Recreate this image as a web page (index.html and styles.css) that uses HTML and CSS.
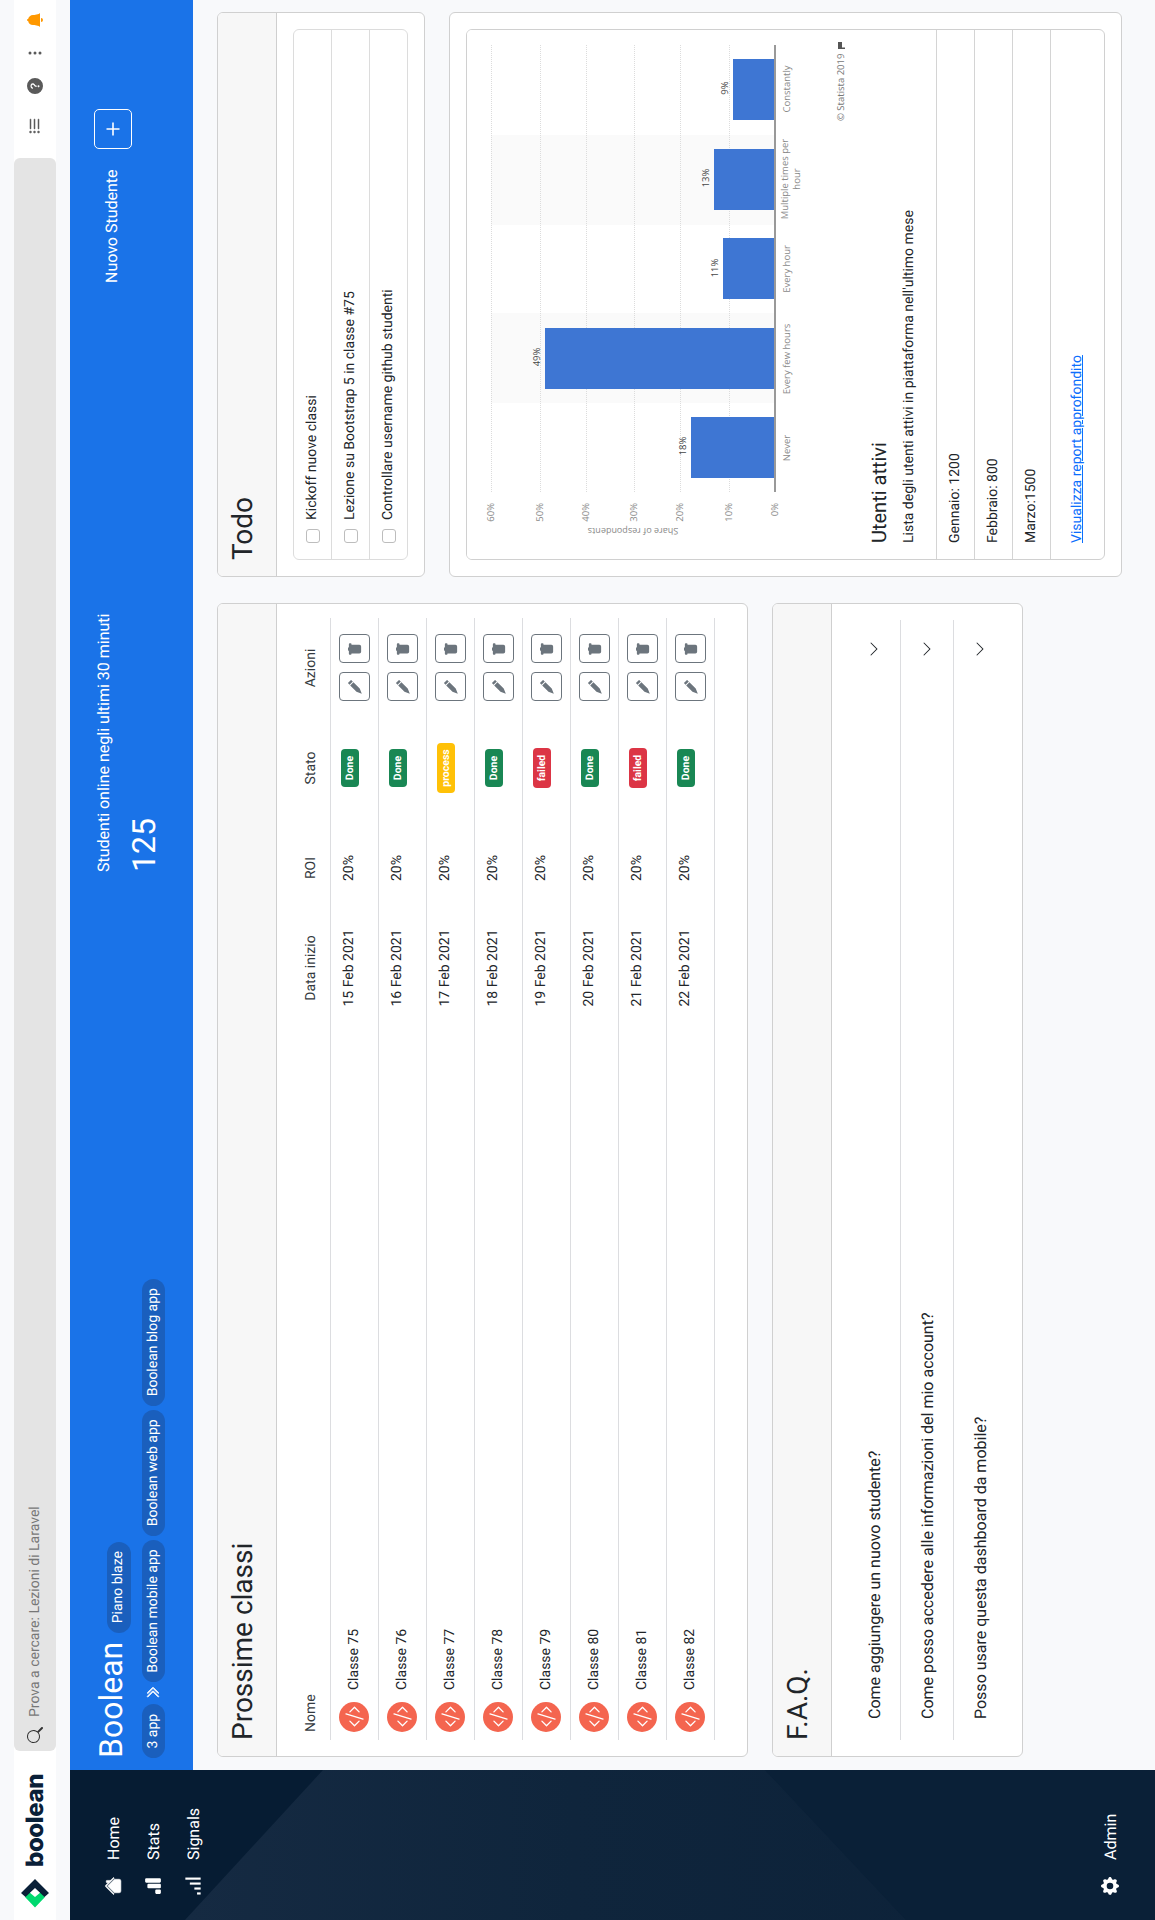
FILE: index.html
```html
<!DOCTYPE html>
<html lang="it">
<head>
<meta charset="utf-8">
<title>Boolean</title>
<link rel="stylesheet" href="styles.css">
</head>
<body>
<svg class="defs" width="0" height="0" aria-hidden="true">
  <symbol id="i-code" viewBox="0 0 16 16"><path d="M10.478 1.647a.5.5 0 1 0-.956-.294l-4 13a.5.5 0 0 0 .956.294l4-13zM4.854 4.146a.5.5 0 0 1 0 .708L1.707 8l3.147 3.146a.5.5 0 0 1-.708.708l-3.5-3.5a.5.5 0 0 1 0-.708l3.5-3.5a.5.5 0 0 1 .708 0zm6.292 0a.5.5 0 0 0 0 .708L14.293 8l-3.147 3.146a.5.5 0 0 0 .708.708l3.5-3.5a.5.5 0 0 0 0-.708l-3.5-3.5a.5.5 0 0 0-.708 0z"/></symbol>
  <symbol id="i-pencil" viewBox="0 0 16 16"><path d="M12.854.146a.5.5 0 0 0-.707 0L10.5 1.793 14.207 5.5l1.647-1.646a.5.5 0 0 0 0-.708l-3-3zM13.5 6.207 9.793 2.5 2.6 9.7.2 15.8l6.1-2.4z"/></symbol>
  <symbol id="i-trash" viewBox="0 0 16 16"><path d="M2.5 1a1 1 0 0 0-1 1v1a1 1 0 0 0 1 1H3v9a2 2 0 0 0 2 2h6a2 2 0 0 0 2-2V4h.5a1 1 0 0 0 1-1V2a1 1 0 0 0-1-1H10a1 1 0 0 0-1-1H7a1 1 0 0 0-1 1H2.5z"/></symbol>
  <symbol id="i-chev" viewBox="0 0 16 16"><path d="M1.646 4.646a.5.5 0 0 1 .708 0L8 10.293l5.646-5.647a.5.5 0 0 1 .708.708l-6 6a.5.5 0 0 1-.708 0l-6-6a.5.5 0 0 1 0-.708z"/></symbol>
</svg>

<div class="page">
  <header class="topbar">
    <a class="brand">
      <svg class="logo" viewBox="0 0 34 34" width="34" height="34">
        <polygon class="logo-green" points="2.5,17 13,27 18,23 13,17 18,11 13,7"/>
        <polygon class="logo-dark" points="31,17 17,31 13,26.5 22,17 13,7.5 17,3"/>
      </svg>
      <span class="brand-name">boolean</span>
    </a>
    <div class="search">
      <svg class="search-icon" viewBox="0 0 16 16" width="16" height="16"><path d="M11.742 10.344a6.5 6.5 0 1 0-1.397 1.398h-.001c.03.04.062.078.098.115l3.85 3.85a1 1 0 0 0 1.415-1.414l-3.85-3.85a1.007 1.007 0 0 0-.115-.1zM12 6.5a5.5 5.5 0 1 1-11 0 5.5 5.5 0 0 1 11 0z"/></svg>
      <span>Prova a cercare: Lezioni di Laravel</span>
    </div>
    <div class="tools">
      <svg class="tool tool-list" viewBox="0 0 16 16" width="16" height="16"><path d="M5 11.5a.5.5 0 0 1 .5-.5h9a.5.5 0 0 1 0 1h-9a.5.5 0 0 1-.5-.5zm0-4a.5.5 0 0 1 .5-.5h9a.5.5 0 0 1 0 1h-9a.5.5 0 0 1-.5-.5zm0-4a.5.5 0 0 1 .5-.5h9a.5.5 0 0 1 0 1h-9a.5.5 0 0 1-.5-.5zm-3 1a1 1 0 1 0 0-2 1 1 0 0 0 0 2zm0 4a1 1 0 1 0 0-2 1 1 0 0 0 0 2zm0 4a1 1 0 1 0 0-2 1 1 0 0 0 0 2z"/></svg>
      <svg class="tool" viewBox="0 0 16 16" width="16" height="16"><path d="M16 8A8 8 0 1 1 0 8a8 8 0 0 1 16 0zM5.496 6.033h.825c.138 0 .248-.113.266-.25.09-.656.54-1.134 1.342-1.134.686 0 1.314.343 1.314 1.168 0 .635-.374.927-.965 1.371-.673.489-1.206 1.06-1.168 1.987l.003.217a.25.25 0 0 0 .25.246h.811a.25.25 0 0 0 .25-.25v-.105c0-.718.273-.927 1.01-1.486.609-.463 1.244-.977 1.244-2.056 0-1.511-1.276-2.241-2.673-2.241-1.267 0-2.655.59-2.75 2.286a.237.237 0 0 0 .241.247zm2.325 6.443c.61 0 1.029-.394 1.029-.927 0-.552-.42-.94-1.029-.94-.584 0-1.009.388-1.009.94 0 .533.425.927 1.01.927z"/></svg>
      <svg class="tool" viewBox="0 0 16 16" width="16" height="16"><path d="M9.5 13a1.5 1.5 0 1 1-3 0 1.5 1.5 0 0 1 3 0zm0-5a1.5 1.5 0 1 1-3 0 1.5 1.5 0 0 1 3 0zm0-5a1.5 1.5 0 1 1-3 0 1.5 1.5 0 0 1 3 0z"/></svg>
      <svg class="tool tool-bell" viewBox="0 0 16 16" width="16" height="16"><path d="M8 16a2 2 0 0 0 2-2H6a2 2 0 0 0 2 2zm.995-14.901a1 1 0 1 0-1.99 0A5.002 5.002 0 0 0 3 6c0 1.098-.5 6-2 7h14c-1.5-1-2-5.902-2-7 0-2.42-1.72-4.44-4.005-4.901z"/></svg>
    </div>
  </header>

  <div class="shell">
    <nav class="sidebar">
      <svg class="side-art" viewBox="0 0 150 1085" width="150" height="1085" aria-hidden="true">
        <defs>
          <linearGradient id="side-fade" x1="0" y1="0" x2="0" y2="1">
            <stop offset="0" stop-color="#152a42"/>
            <stop offset="0.4" stop-color="#0f253c"/>
            <stop offset="1" stop-color="#0c2138"/>
          </linearGradient>
        </defs>
        <polygon fill="url(#side-fade)" points="0,115 150,253 150,1085 0,1085"/>
        <polygon class="side-shade" points="150,695 150,1085 0,1085 0,836"/>
      </svg>
      <a class="nav-item">
        <svg class="nav-icon nav-home" viewBox="0 0 16 16"><path d="M8 3.293l6 6V13.5a1.5 1.5 0 0 1-1.5 1.5h-9A1.5 1.5 0 0 1 2 13.5V9.293l6-6zm5-.793V6l-2-2V2.5a.5.5 0 0 1 .5-.5h1a.5.5 0 0 1 .5.5z"/><path d="M7.293 1.5a1 1 0 0 1 1.414 0l6.647 6.646a.5.5 0 0 1-.708.708L8 2.207 1.354 8.854a.5.5 0 1 1-.708-.708L7.293 1.5z"/></svg>
        <span>Home</span>
      </a>
      <a class="nav-item">
        <svg class="nav-icon" viewBox="0 0 16 16"><path d="M1 11a1 1 0 0 1 1-1h2a1 1 0 0 1 1 1v3a1 1 0 0 1-1 1H2a1 1 0 0 1-1-1v-3zm5-7a1 1 0 0 1 1-1h2a1 1 0 0 1 1 1v10a1 1 0 0 1-1 1H7a1 1 0 0 1-1-1V4zm5-2a1 1 0 0 1 1-1h2a1 1 0 0 1 1 1v12a1 1 0 0 1-1 1h-2a1 1 0 0 1-1-1V2z"/></svg>
        <span>Stats</span>
      </a>
      <a class="nav-item">
        <svg class="nav-icon" viewBox="0 0 20 18"><rect x="0.5" y="13.5" width="2.4" height="4"/><rect x="6" y="10.5" width="2.4" height="7"/><rect x="11.5" y="5.5" width="2.4" height="12"/><rect x="17" y="0.5" width="2.4" height="17"/></svg>
        <span>Signals</span>
      </a>
      <a class="nav-item nav-admin">
        <svg class="nav-icon" viewBox="0 0 16 16"><path d="M9.405 1.05c-.413-1.4-2.397-1.4-2.81 0l-.1.34a1.464 1.464 0 0 1-2.105.872l-.31-.17c-1.283-.698-2.686.705-1.987 1.987l.169.311c.446.82.023 1.841-.872 2.105l-.34.1c-1.4.413-1.4 2.397 0 2.81l.34.1a1.464 1.464 0 0 1 .872 2.105l-.17.31c-.698 1.283.705 2.686 1.987 1.987l.311-.169a1.464 1.464 0 0 1 2.105.872l.1.34c.413 1.4 2.397 1.4 2.81 0l.1-.34a1.464 1.464 0 0 1 2.105-.872l.31.17c1.283.698 2.686-.705 1.987-1.987l-.169-.311a1.464 1.464 0 0 1 .872-2.105l.34-.1c1.4-.413 1.4-2.397 0-2.81l-.34-.1a1.464 1.464 0 0 1-.872-2.105l.17-.31c.698-1.283-.705-2.686-1.987-1.987l-.311.169a1.464 1.464 0 0 1-2.105-.872l-.1-.34zM8 10.93a2.929 2.929 0 1 1 0-5.86 2.929 2.929 0 0 1 0 5.858z"/></svg>
        <span>Admin</span>
      </a>
    </nav>

    <main class="main">
      <section class="hero">
        <div class="hero-left">
          <div class="hero-title-row">
            <h1 class="hero-title">Boolean</h1>
            <span class="pill pill-plan">Piano blaze</span>
          </div>
          <div class="hero-apps">
            <span class="pill">3 app</span>
            <svg class="hero-chev" viewBox="0 0 16 16" width="14" height="14"><path d="M3.646 1.646a.5.5 0 0 1 .708 0l6 6a.5.5 0 0 1 0 .708l-6 6a.5.5 0 0 1-.708-.708L9.293 8 3.646 2.354a.5.5 0 0 1 0-.708z"/><path d="M7.646 1.646a.5.5 0 0 1 .708 0l6 6a.5.5 0 0 1 0 .708l-6 6a.5.5 0 0 1-.708-.708L13.293 8 7.646 2.354a.5.5 0 0 1 0-.708z"/></svg>
            <span class="pill">Boolean mobile app</span>
            <span class="pill">Boolean web app</span>
            <span class="pill">Boolean blog app</span>
          </div>
        </div>
        <div class="hero-mid">
          <div class="hero-label">Studenti online negli ultimi 30 minuti</div>
          <div class="hero-count">125</div>
        </div>
        <div class="hero-right">
          <span class="hero-new">Nuovo Studente</span>
          <button class="plus-btn" type="button">
            <svg viewBox="0 0 14 14" width="14" height="14"><path d="M7 .5v13M.5 7h13"/></svg>
          </button>
        </div>
      </section>

      <div class="columns">
        <div class="col col-left">
          <section class="card">
            <h2 class="card-head">Prossime classi</h2>
            <div class="card-body">
              <table class="classes">
                <colgroup><col class="c-name"><col class="c-num"><col class="c-num"><col class="c-num"><col class="c-num"></colgroup>
                <thead>
                  <tr><th class="left">Nome</th><th>Data inizio</th><th>ROI</th><th>Stato</th><th>Azioni</th></tr>
                </thead>
                <tbody>
                  <tr>
                    <td><div class="cl"><span class="avatar"><svg viewBox="0 0 16 16"><use href="#i-code"/></svg></span>Classe 75</div></td>
                    <td>15 Feb 2021</td><td>20%</td><td><span class="tag tag-done">Done</span></td>
                    <td><div class="acts"><button class="act" type="button"><svg viewBox="0 0 16 16"><use href="#i-pencil"/></svg></button><button class="act" type="button"><svg viewBox="0 0 16 16"><use href="#i-trash"/></svg></button></div></td>
                  </tr>
                  <tr>
                    <td><div class="cl"><span class="avatar"><svg viewBox="0 0 16 16"><use href="#i-code"/></svg></span>Classe 76</div></td>
                    <td>16 Feb 2021</td><td>20%</td><td><span class="tag tag-done">Done</span></td>
                    <td><div class="acts"><button class="act" type="button"><svg viewBox="0 0 16 16"><use href="#i-pencil"/></svg></button><button class="act" type="button"><svg viewBox="0 0 16 16"><use href="#i-trash"/></svg></button></div></td>
                  </tr>
                  <tr>
                    <td><div class="cl"><span class="avatar"><svg viewBox="0 0 16 16"><use href="#i-code"/></svg></span>Classe 77</div></td>
                    <td>17 Feb 2021</td><td>20%</td><td><span class="tag tag-process">process</span></td>
                    <td><div class="acts"><button class="act" type="button"><svg viewBox="0 0 16 16"><use href="#i-pencil"/></svg></button><button class="act" type="button"><svg viewBox="0 0 16 16"><use href="#i-trash"/></svg></button></div></td>
                  </tr>
                  <tr>
                    <td><div class="cl"><span class="avatar"><svg viewBox="0 0 16 16"><use href="#i-code"/></svg></span>Classe 78</div></td>
                    <td>18 Feb 2021</td><td>20%</td><td><span class="tag tag-done">Done</span></td>
                    <td><div class="acts"><button class="act" type="button"><svg viewBox="0 0 16 16"><use href="#i-pencil"/></svg></button><button class="act" type="button"><svg viewBox="0 0 16 16"><use href="#i-trash"/></svg></button></div></td>
                  </tr>
                  <tr>
                    <td><div class="cl"><span class="avatar"><svg viewBox="0 0 16 16"><use href="#i-code"/></svg></span>Classe 79</div></td>
                    <td>19 Feb 2021</td><td>20%</td><td><span class="tag tag-failed">failed</span></td>
                    <td><div class="acts"><button class="act" type="button"><svg viewBox="0 0 16 16"><use href="#i-pencil"/></svg></button><button class="act" type="button"><svg viewBox="0 0 16 16"><use href="#i-trash"/></svg></button></div></td>
                  </tr>
                  <tr>
                    <td><div class="cl"><span class="avatar"><svg viewBox="0 0 16 16"><use href="#i-code"/></svg></span>Classe 80</div></td>
                    <td>20 Feb 2021</td><td>20%</td><td><span class="tag tag-done">Done</span></td>
                    <td><div class="acts"><button class="act" type="button"><svg viewBox="0 0 16 16"><use href="#i-pencil"/></svg></button><button class="act" type="button"><svg viewBox="0 0 16 16"><use href="#i-trash"/></svg></button></div></td>
                  </tr>
                  <tr>
                    <td><div class="cl"><span class="avatar"><svg viewBox="0 0 16 16"><use href="#i-code"/></svg></span>Classe 81</div></td>
                    <td>21 Feb 2021</td><td>20%</td><td><span class="tag tag-failed">failed</span></td>
                    <td><div class="acts"><button class="act" type="button"><svg viewBox="0 0 16 16"><use href="#i-pencil"/></svg></button><button class="act" type="button"><svg viewBox="0 0 16 16"><use href="#i-trash"/></svg></button></div></td>
                  </tr>
                  <tr>
                    <td><div class="cl"><span class="avatar"><svg viewBox="0 0 16 16"><use href="#i-code"/></svg></span>Classe 82</div></td>
                    <td>22 Feb 2021</td><td>20%</td><td><span class="tag tag-done">Done</span></td>
                    <td><div class="acts"><button class="act" type="button"><svg viewBox="0 0 16 16"><use href="#i-pencil"/></svg></button><button class="act" type="button"><svg viewBox="0 0 16 16"><use href="#i-trash"/></svg></button></div></td>
                  </tr>
                </tbody>
              </table>
            </div>
          </section>

          <section class="card">
            <h2 class="card-head">F.A.Q.</h2>
            <div class="card-body faq">
              <div class="faq-row"><span>Come aggiungere un nuovo studente?</span><svg viewBox="0 0 16 16"><use href="#i-chev"/></svg></div>
              <div class="faq-row"><span>Come posso accedere alle informazioni del mio account?</span><svg viewBox="0 0 16 16"><use href="#i-chev"/></svg></div>
              <div class="faq-row"><span>Posso usare questa dashboard da mobile?</span><svg viewBox="0 0 16 16"><use href="#i-chev"/></svg></div>
            </div>
          </section>
        </div>

        <div class="col col-right">
          <section class="card">
            <h2 class="card-head">Todo</h2>
            <div class="card-body">
              <ul class="list list-todo">
                <li><input class="check" type="checkbox"><span>Kickoff nuove classi</span></li>
                <li><input class="check" type="checkbox"><span>Lezione su Bootstrap 5 in classe #75</span></li>
                <li><input class="check" type="checkbox"><span>Controllare username github studenti</span></li>
              </ul>
            </div>
          </section>

          <section class="card card-pad">
            <div class="inner">
              <svg class="chart" viewBox="0 0 529 385" width="529" height="385">
                <rect class="band" x="156" y="24" width="90" height="284"/>
                <rect class="band" x="334" y="24" width="90" height="284"/>
                <g class="grid">
                  <line x1="67" x2="514" y1="24.5" y2="24.5"/>
                  <line x1="67" x2="514" y1="73.5" y2="73.5"/>
                  <line x1="67" x2="514" y1="119.5" y2="119.5"/>
                  <line x1="67" x2="514" y1="167.5" y2="167.5"/>
                  <line x1="67" x2="514" y1="213.5" y2="213.5"/>
                  <line x1="67" x2="514" y1="262.5" y2="262.5"/>
                </g>
                <g class="bars">
                  <rect x="81" y="224" width="61" height="84"/>
                  <rect x="170" y="78" width="61" height="230"/>
                  <rect x="260" y="256" width="61" height="52"/>
                  <rect x="349" y="247" width="61" height="61"/>
                  <rect x="439" y="266" width="61" height="42"/>
                </g>
                <line class="axis" x1="67" x2="514" y1="308" y2="308"/>
                <g class="ticks">
                  <text x="56" y="27">60%</text>
                  <text x="56" y="76">50%</text>
                  <text x="56" y="122">40%</text>
                  <text x="56" y="170">30%</text>
                  <text x="56" y="216">20%</text>
                  <text x="56" y="265">10%</text>
                  <text x="56" y="311">0%</text>
                </g>
                <text class="axis-title" transform="translate(31 166) rotate(-90)">Share of respondents</text>
                <g class="values">
                  <text x="113" y="219">18%</text>
                  <text x="202" y="73">49%</text>
                  <text x="291" y="251">11%</text>
                  <text x="381" y="242">13%</text>
                  <text x="471" y="261">9%</text>
                </g>
                <g class="cats">
                  <text x="111" y="323">Never</text>
                  <text x="200" y="323">Every few hours</text>
                  <text x="290" y="323">Every hour</text>
                  <text x="380" y="321">Multiple times per</text>
                  <text x="380" y="333">hour</text>
                  <text x="470" y="323">Constantly</text>
                </g>
                <text class="credit" x="438" y="377">© Statista 2019</text>
                <path class="credit-flag" d="M510 371h7v4h-7zM510 375h1.5v3h-1.5z"/>
              </svg>
              <div class="inner-body">
                <h5 class="inner-title">Utenti attivi</h5>
                <p class="inner-text">Lista degli utenti attivi in piattaforma nell'ultimo mese</p>
              </div>
              <ul class="list list-flush">
                <li>Gennaio: 1200</li>
                <li>Febbraio: 800</li>
                <li>Marzo:1500</li>
              </ul>
              <div class="inner-foot"><a class="report" href="#">Visualizza report approfondito</a></div>
            </div>
          </section>
        </div>
      </div>
    </main>
  </div>
</div>
</body>
</html>
```
FILE: styles.css
```css
* { box-sizing: border-box; }
html, body {
  margin: 0;
  padding: 0;
  width: 1155px;
  height: 1920px;
  overflow: hidden;
  background: #f8f9fb;
}
body {
  font-family: Roboto, "Liberation Sans", sans-serif;
  font-size: 14px;
  line-height: 21px;
  color: #212529;
  text-rendering: geometricPrecision;
}
.defs { position: absolute; }

/* The whole dashboard is laid out normally, then turned a quarter turn */
.page {
  width: 1920px;
  height: 1155px;
  padding-top: 14px;
  transform-origin: 0 0;
  transform: matrix(0, -1, 1, 0, 0, 1920);
  display: flex;
  flex-direction: column;
  gap: 14px;
}

/* Top bar */
.topbar {
  height: 42px;
  flex: none;
  background: #fff;
  display: flex;
  align-items: center;
}
.brand {
  width: 169px;
  flex: none;
  display: flex;
  align-items: center;
  gap: 9px;
  padding-left: 10px;
}
.logo { flex: none; }
.logo-green { fill: #00d96f; }
.logo-dark { fill: #0a2038; }
.brand-name {
  font-family: Inter, "Liberation Sans", sans-serif;
  font-weight: 800;
  font-size: 24px;
  letter-spacing: -0.4px;
  line-height: 30px;
  color: #0a2038;
}
.search {
  width: 1593px;
  flex: none;
  height: 42px;
  background: #e4e4e4;
  border-radius: 6px;
  display: flex;
  align-items: center;
  gap: 10px;
  padding-left: 8px;
  color: #777;
}
.search-icon { fill: #333; flex: none; }
.tools {
  display: flex;
  align-items: center;
  gap: 17px;
  padding-left: 24px;
}
.tool { fill: #5a5a5a; flex: none; }
.tool-list { margin-right: 7px; stroke: #5a5a5a; stroke-width: .5; }
.tool-bell { fill: #ff9800; }

/* Shell */
.shell {
  flex: 1;
  display: flex;
  min-height: 0;
}
.sidebar {
  width: 150px;
  flex: none;
  position: relative;
  overflow: hidden;
  background: #061c33;
  padding: 23px 0 25px;
  display: flex;
  flex-direction: column;
  color: #fff;
}
.side-art { position: absolute; left: 0; top: 0; }
.side-shade { fill: #0a2037; }
.nav-item {
  position: relative;
  height: 40px;
  display: flex;
  align-items: center;
  gap: 17px;
  padding-left: 25px;
  font-size: 16px;
}
.nav-icon { width: 18px; height: 18px; fill: #fff; flex: none; }
.nav-home { stroke: #fff; stroke-width: .5; }
.nav-admin { margin-top: auto; }

.main {
  flex: 1;
  min-width: 0;
}

/* Blue header */
.hero {
  height: 123px;
  background: #1a73e8;
  color: #fff;
  padding: 22px 0 0 12px;
  display: grid;
  grid-template-columns: 886px 589px auto;
}
.hero-title-row {
  display: flex;
  align-items: baseline;
  gap: 9px;
}
.hero-title {
  margin: 0;
  font-size: 32px;
  line-height: 38px;
  font-weight: 400;
}
.pill {
  display: inline-flex;
  align-items: center;
  height: 23px;
  padding: 0 9.5px;
  border-radius: 12px;
  background: #1a5fbd;
  color: #fff;
  font-size: 14px;
  font-weight: 400;
  white-space: nowrap;
}
.pill-plan { height: 24px; }
.hero-apps {
  margin-top: 11px;
  display: flex;
  align-items: center;
  gap: 4px;
}
.hero-chev { fill: #fff; stroke: #fff; stroke-width: 1; flex: none; }
.hero-mid { padding-top: 1px; }
.hero-label { font-size: 16px; line-height: 21px; }
.hero-count { font-size: 32px; line-height: 38px; margin-top: 11px; }
.hero-right {
  display: flex;
  align-items: center;
  gap: 20px;
  height: 38px;
  margin-top: 2px;
}
.hero-new { font-size: 16px; margin-bottom: 3px; }
.plus-btn {
  width: 40px;
  height: 38px;
  padding: 0;
  background: transparent;
  border: 1px solid #fff;
  border-radius: 5px;
  display: flex;
  align-items: center;
  justify-content: center;
}
.plus-btn path { stroke: #fff; stroke-width: 1.6; fill: none; }

/* Columns and cards */
.columns {
  padding: 24px 12px 0 13px;
  display: flex;
  gap: 26px;
}
.col {
  display: flex;
  flex-direction: column;
  gap: 24px;
}
.col-left { width: 1154px; }
.col-right { width: 565px; }
.card {
  background: #fff;
  border: 1px solid #d0d0d0;
  border-radius: 6px;
  overflow: hidden;
}
.card-pad { padding: 16px; }
.card-head {
  margin: 0;
  height: 59px;
  padding: 8px 16px 0;
  font-size: 28px;
  line-height: 34px;
  font-weight: 400;
  background: #f7f7f7;
  border-bottom: 1px solid #cfcfcf;
}
.card-body { padding: 16px; }

/* Classes table */
.classes {
  width: 1122px;
  table-layout: fixed;
  border-collapse: separate;
  border-spacing: 0;
  margin-bottom: 16px;
}
.c-name { width: 722px; }
.c-num { width: 100px; }
.classes th {
  height: 38px;
  padding: 8px;
  font-weight: 400;
  text-align: center;
  vertical-align: top;
  border-bottom: 1px solid #dcdde0;
  color: #343a40;
}
.classes th.left { text-align: left; }
.classes td {
  height: 48px;
  padding: 8px;
  text-align: center;
  vertical-align: top;
  border-bottom: 1px solid #dcdde0;
}
.cl {
  display: flex;
  align-items: center;
  gap: 12px;
}
.avatar {
  width: 30px;
  height: 30px;
  border-radius: 50%;
  background: #f4654f;
  display: flex;
  align-items: center;
  justify-content: center;
  flex: none;
}
.avatar svg { width: 21px; height: 21px; fill: #fff; }
.tag {
  display: inline-block;
  padding: 3.7px 6.6px;
  font-size: 10.5px;
  line-height: 10.5px;
  font-weight: 700;
  color: #fff;
  border-radius: 4px;
  vertical-align: baseline;
}
.tag-done { background: #198754; }
.tag-process { background: #ffc107; }
.tag-failed { background: #dc3545; }
.acts {
  display: flex;
  justify-content: center;
  gap: 9px;
}
.act {
  width: 29px;
  height: 31px;
  padding: 0;
  background: #fff;
  border: 1px solid #6c757d;
  border-radius: 4px;
  display: flex;
  align-items: center;
  justify-content: center;
}
.act svg { width: 14px; height: 14px; fill: #6c757d; }

/* FAQ */
.faq-row {
  height: 53px;
  padding: 0 21px;
  display: flex;
  align-items: center;
  justify-content: space-between;
  font-size: 16px;
  border-bottom: 1px solid #dcdde0;
}
.faq-row:last-child { border-bottom: none; height: 52px; }
.faq-row svg { width: 16px; height: 16px; fill: #212529; flex: none; }

/* Lists */
.list {
  list-style: none;
  margin: 0;
  padding: 0;
}
.list li {
  height: 38px;
  padding: 8px 16px;
  display: flex;
  align-items: center;
  border-bottom: 1px solid #d4d4d4;
}
.list-todo {
  border: 1px solid #dcdcdc;
  border-radius: 6px;
}
.list-todo li { border-bottom-color: #dcdcdc; }
.list-todo li:last-child { border-bottom: none; height: 37px; }
.check {
  appearance: none;
  width: 14px;
  height: 14px;
  margin: 0 9px 0 0;
  flex: none;
  border: 1px solid #bdbdbd;
  border-radius: 3px;
  background: #fff;
}

/* Chart card */
.inner {
  border: 1px solid #d0d0d0;
  border-radius: 6px;
  overflow: hidden;
}
.chart { display: block; background: #fff; }
.band { fill: #fafafa; }
.grid line { stroke: #dcdcdc; stroke-width: 1; stroke-dasharray: 1 1; }
.bars rect { fill: #3e76d3; }
.axis { stroke: #999; stroke-width: 2; }
.chart text { font-family: "Open Sans", "Liberation Sans", sans-serif; }
.ticks text { font-size: 9.5px; fill: #8a8a8a; text-anchor: end; }
.axis-title { font-size: 9px; fill: #8a8a8a; text-anchor: middle; }
.values text { font-size: 9.5px; fill: #444; text-anchor: middle; }
.cats text { font-size: 9.5px; fill: #8a8a8a; text-anchor: middle; }
.credit { font-size: 9.5px; fill: #777; }
.credit-flag { fill: #555; }
.inner-body {
  height: 85px;
  padding: 15px 16px 0;
  border-bottom: 1px solid #d4d4d4;
}
.inner-title {
  margin: 0 0 8px;
  font-size: 20px;
  line-height: 24px;
  font-weight: 400;
}
.inner-text { margin: 0; }
.inner-foot { padding: 16px; height: 53px; }
.report { color: #0d6efd; text-decoration: underline; }
```
